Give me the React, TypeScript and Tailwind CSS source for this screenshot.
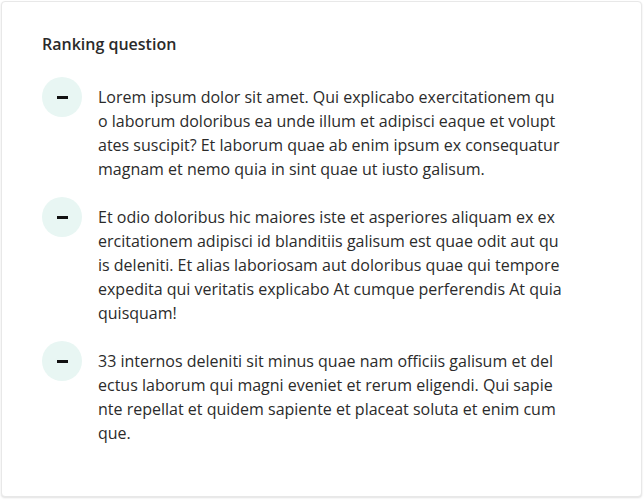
const items = [
  "Lorem ipsum dolor sit amet. Qui explicabo exercitationem quo laborum doloribus ea unde illum et adipisci eaque et voluptates suscipit? Et laborum quae ab enim ipsum ex consequatur magnam et nemo quia in sint quae ut iusto galisum.",
  "Et odio doloribus hic maiores iste et asperiores aliquam ex exercitationem adipisci id blanditiis galisum est quae odit aut quis deleniti. Et alias laboriosam aut doloribus quae qui tempore expedita qui veritatis explicabo At cumque perferendis At quia quisquam!",
  "33 internos deleniti sit minus quae nam officiis galisum et delectus laborum qui magni eveniet et rerum eligendi. Qui sapiente repellat et quidem sapiente et placeat soluta et enim cumque.",
];

export default function App() {
  return (
    <div className="min-h-[500px] w-[644px] bg-white p-px font-['Open_Sans',sans-serif]">
      <div className="w-[641px] rounded-[4px] border border-[#e8e8e8] bg-white pb-[51px] pl-10 pt-[31px] shadow-[0_1px_2px_rgba(0,0,0,0.12)]">
        <h2 className="text-base font-semibold leading-[22px] text-[#2a2a2a]">
          Ranking question
        </h2>
        <ul className="mt-[22px] flex flex-col gap-4">
          {items.map((text, i) => (
            <li key={i} className="flex items-start gap-4">
              <button
                type="button"
                className="flex h-10 w-10 shrink-0 items-center justify-center rounded-full bg-[#e8f6f3]"
              >
                <span className="block h-[3px] w-[11px] bg-[#111]" />
              </button>
              <p className="mt-2 w-[464px] break-all text-base leading-6 text-[#2b2b2b]">
                {text}
              </p>
            </li>
          ))}
        </ul>
      </div>
    </div>
  );
}
